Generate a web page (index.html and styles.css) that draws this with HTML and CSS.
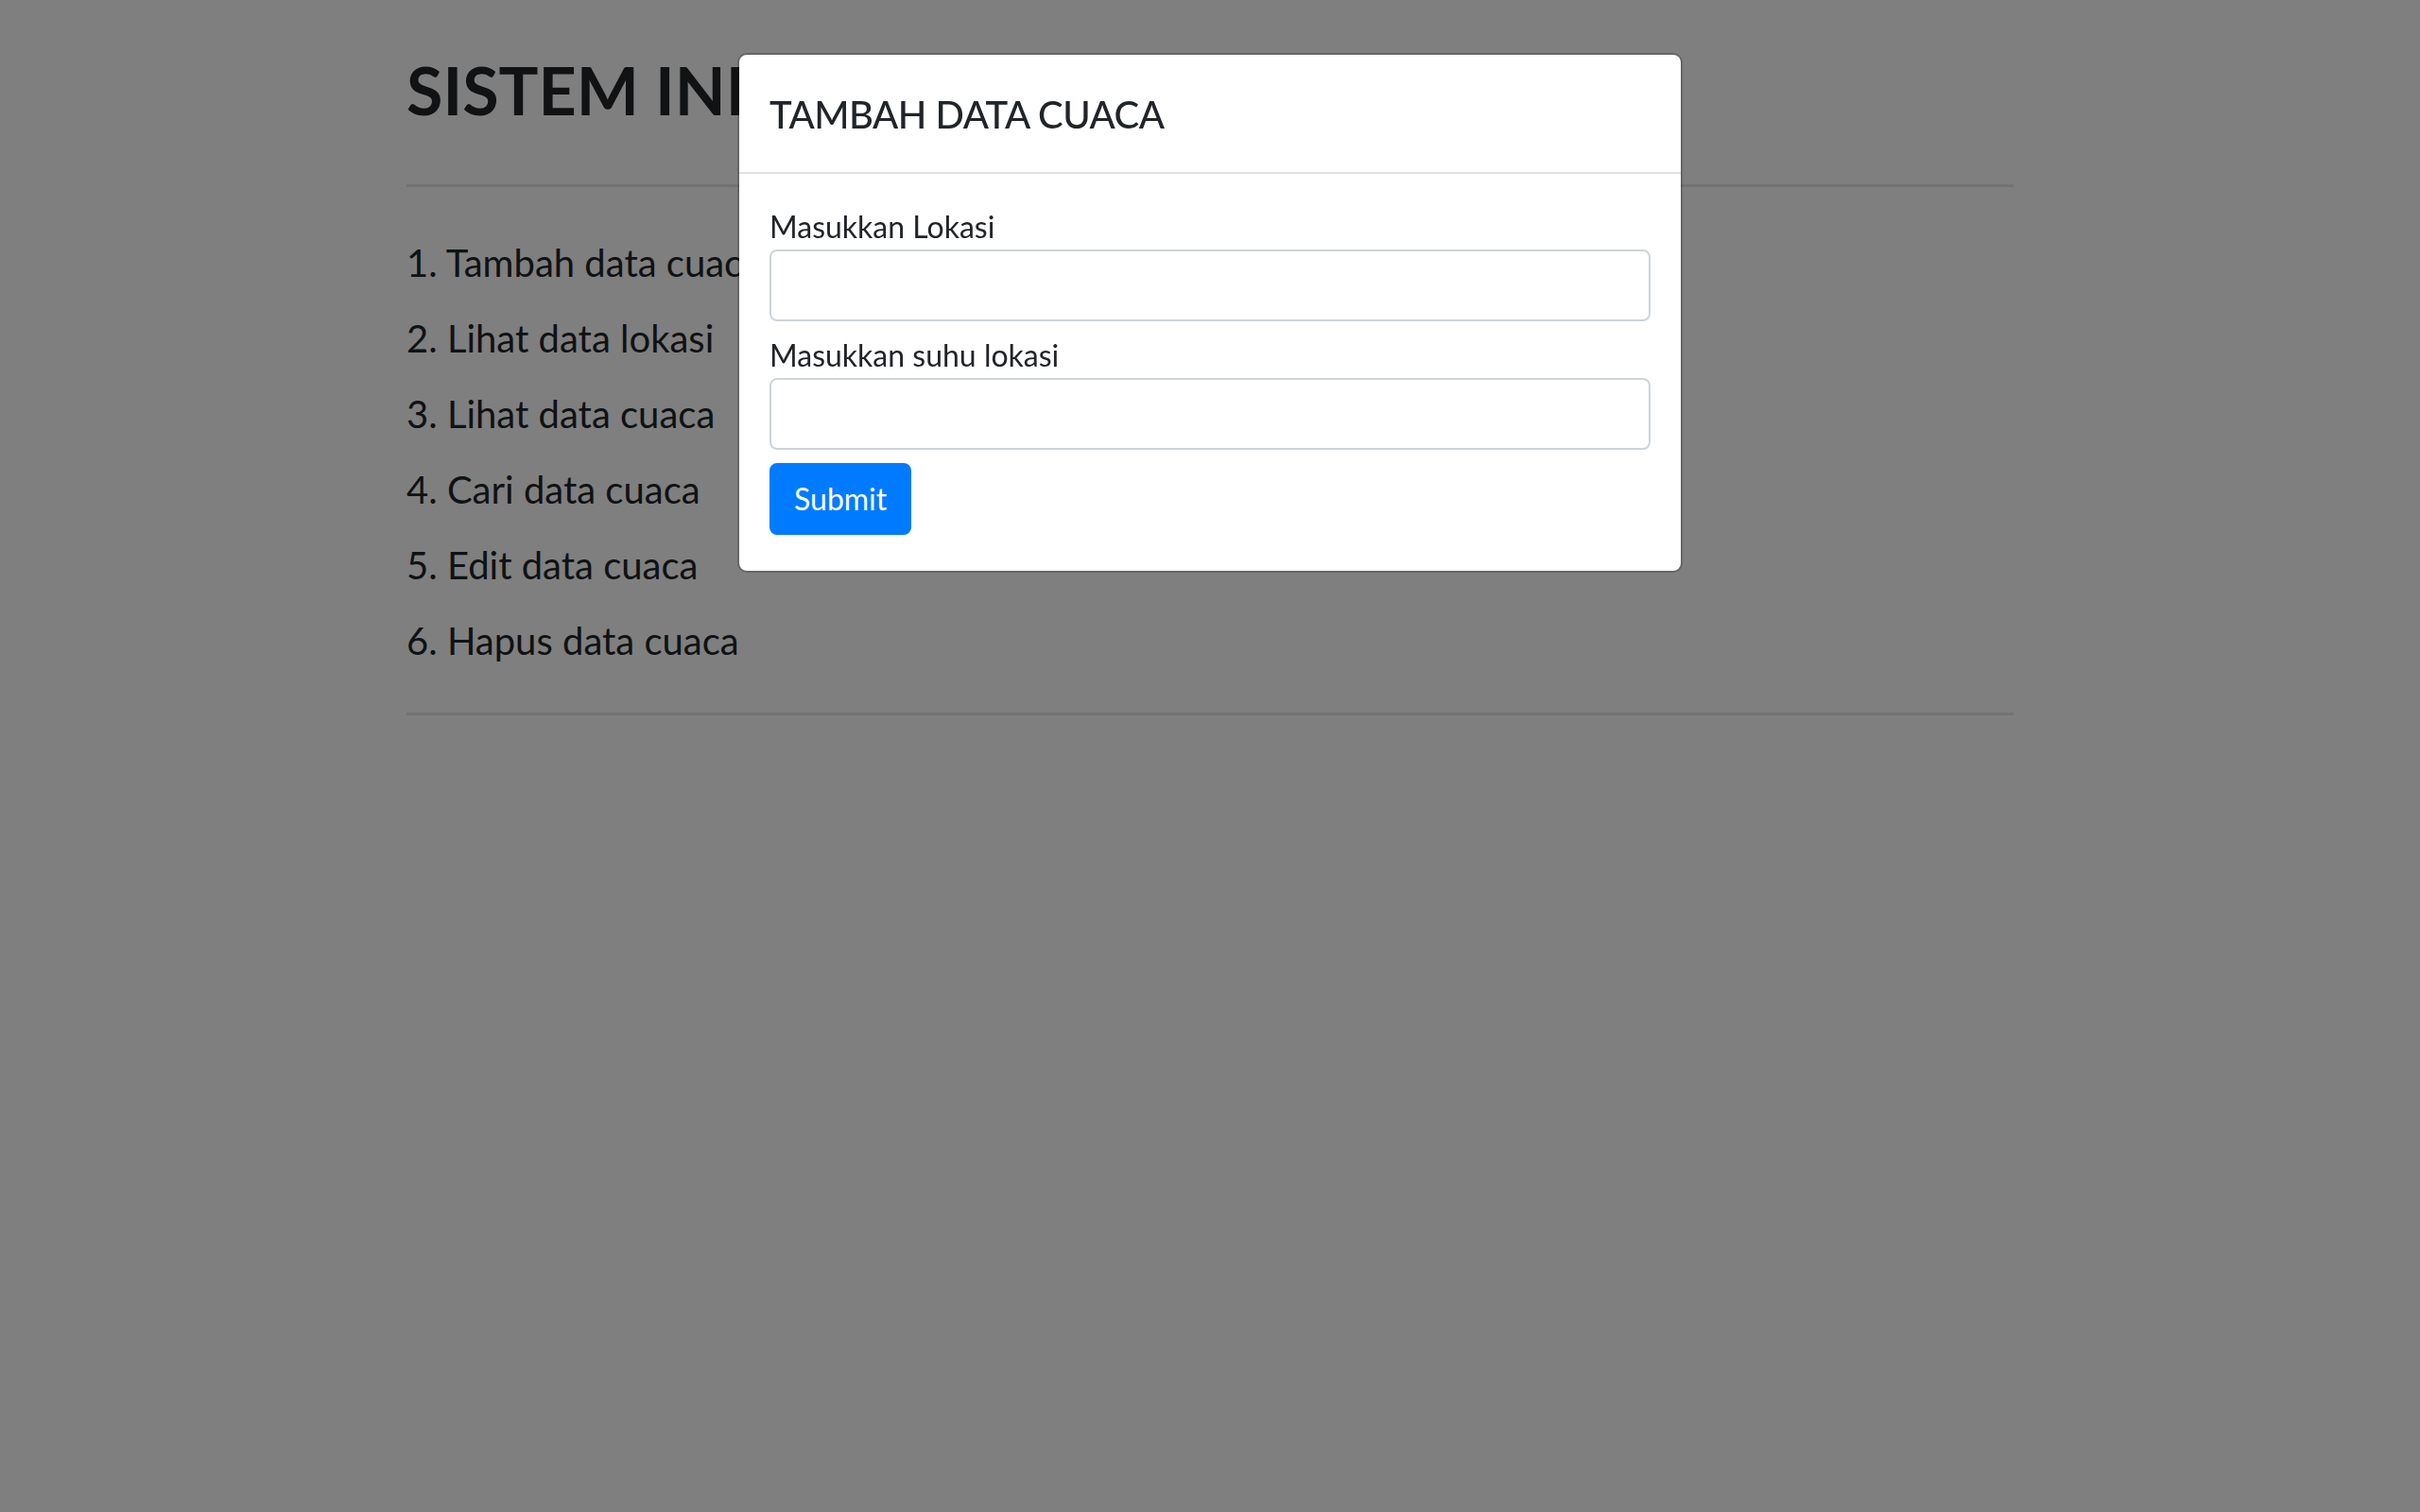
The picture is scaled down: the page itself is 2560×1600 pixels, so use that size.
FILE: index.html
```html
<!DOCTYPE html>
<html lang="id">
<head>
<meta charset="utf-8">
<title>Sistem Informasi Cuaca</title>
<link rel="stylesheet" href="styles.css">
</head>
<body>
  <div class="container">
    <h1 class="title">SISTEM INFORMASI CUACA</h1>
    <hr class="divider">
    <div class="menu">
      <p class="menu-item">1. Tambah data cuaca</p>
      <p class="menu-item">2. Lihat data lokasi</p>
      <p class="menu-item">3. Lihat data cuaca</p>
      <p class="menu-item">4. Cari data cuaca</p>
      <p class="menu-item">5. Edit data cuaca</p>
      <p class="menu-item">6. Hapus data cuaca</p>
    </div>
    <hr class="divider divider-bottom">
  </div>

  <div class="backdrop"></div>

  <div class="modal">
    <div class="modal-dialog">
      <div class="modal-content">
        <div class="modal-header">
          <h5 class="modal-title">TAMBAH DATA CUACA</h5>
        </div>
        <div class="modal-body">
          <form class="form">
            <label class="form-label" for="lokasi">Masukkan Lokasi</label>
            <input class="form-control" type="text" id="lokasi">
            <label class="form-label form-label-next" for="suhu">Masukkan suhu lokasi</label>
            <input class="form-control" type="text" id="suhu">
            <button class="btn-primary" type="submit">Submit</button>
          </form>
        </div>
      </div>
    </div>
  </div>
</body>
</html>
```

FILE: styles.css
```css
html, body {
  margin: 0;
  padding: 0;
}

body {
  background: #ffffff;
  color: #212529;
  font-family: Lato, "Noto Sans", sans-serif;
  min-height: 1600px;
}

.container {
  width: 1700px;
  margin: 0 auto;
  padding-top: 53px;
}

.title {
  margin: 0 0 58px 0;
  font-size: 70px;
  line-height: 84px;
  font-weight: 700;
  color: #212529;
}

.divider {
  border: 0;
  height: 3px;
  margin: 38px 0;
  background: #e6e6e6;
}

.divider-bottom {
  margin-top: 36px;
}

.menu {
  display: flex;
  flex-direction: column;
  padding-top: 2px;
}

.menu-item {
  margin: 0;
  font-size: 40px;
  line-height: 80px;
  font-weight: 400;
}

.backdrop {
  position: fixed;
  inset: 0;
  background: rgba(0, 0, 0, 0.5);
}

.modal {
  position: fixed;
  inset: 0;
}

.modal-dialog {
  width: 1000px;
  margin: 56px auto 0;
}

.modal-content {
  background: #ffffff;
  background-clip: padding-box;
  border: 2px solid rgba(0, 0, 0, 0.2);
  border-radius: 10px;
}

.modal-header {
  padding: 33px 32px 31px;
  border-bottom: 2px solid #dee2e6;
}

.modal-title {
  margin: 0;
  font-size: 40px;
  line-height: 60px;
  font-weight: 500;
  letter-spacing: -0.5px;
  color: #212529;
}

.modal-body {
  padding: 32px 32px 38px;
}

.form {
  display: flex;
  flex-direction: column;
  align-items: flex-start;
  margin: 0;
}

.form-label {
  font-size: 32px;
  line-height: 48px;
  color: #212529;
}

.form-label-next {
  margin-top: 12px;
}

.form-control {
  box-sizing: border-box;
  width: 100%;
  height: 76px;
  margin: 0;
  padding: 12px 24px;
  border: 2px solid #ced4da;
  border-radius: 8px;
  background: #ffffff;
  font-family: inherit;
  font-size: 32px;
  color: #495057;
  outline: none;
}

.btn-primary {
  box-sizing: border-box;
  height: 76px;
  margin-top: 14px;
  padding: 0 24px;
  border: 2px solid #007bff;
  border-radius: 8px;
  background: #007bff;
  color: #ffffff;
  font-family: inherit;
  font-size: 32px;
  line-height: 48px;
  cursor: pointer;
}
```
